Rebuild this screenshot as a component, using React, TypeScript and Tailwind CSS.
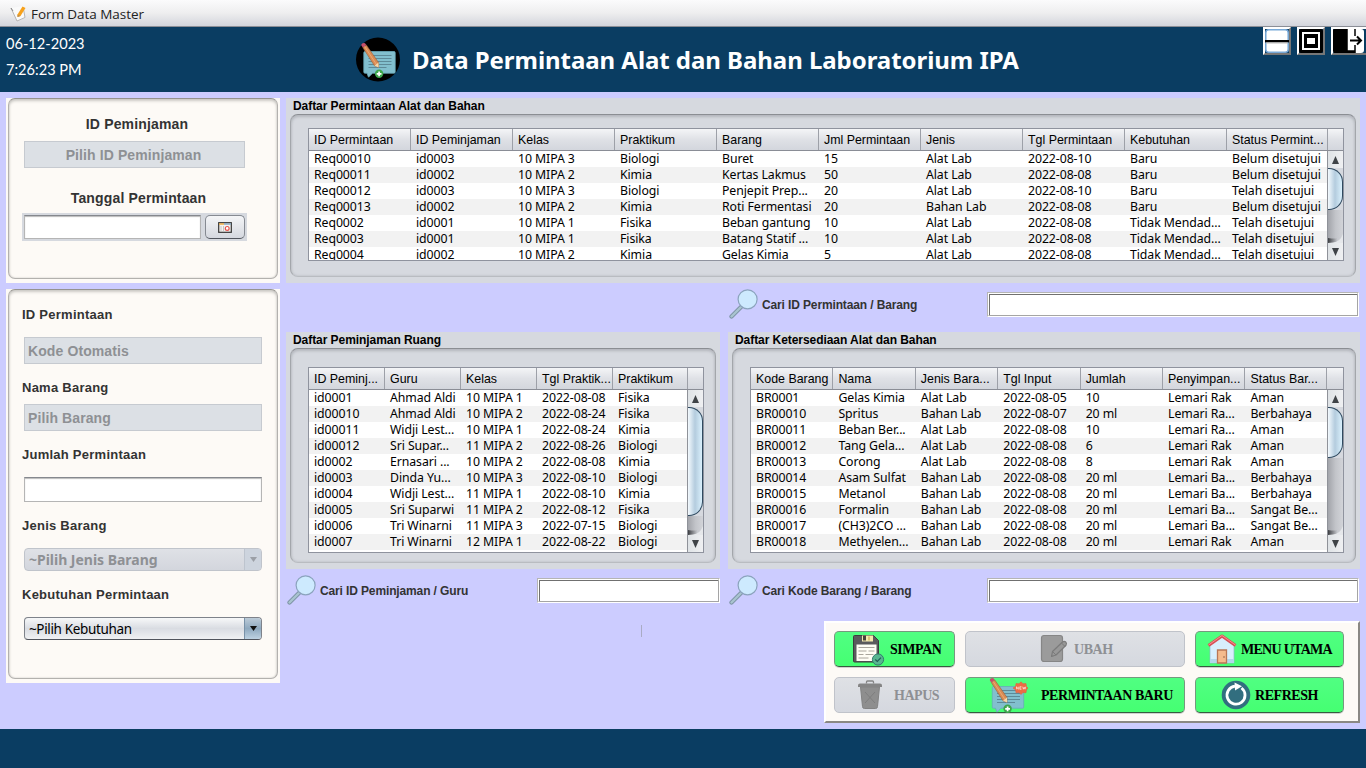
import React from "react";

const permintaanCols = ["ID Permintaan", "ID Peminjaman", "Kelas", "Praktikum", "Barang", "Jml Permintaan", "Jenis", "Tgl Permintaan", "Kebutuhan", "Status Permint..."];
const permintaanRows = [
  ["Req00010", "id0003", "10 MIPA 3", "Biologi", "Buret", "15", "Alat Lab", "2022-08-10", "Baru", "Belum disetujui"],
  ["Req00011", "id0002", "10 MIPA 2", "Kimia", "Kertas Lakmus", "50", "Alat Lab", "2022-08-08", "Baru", "Belum disetujui"],
  ["Req00012", "id0003", "10 MIPA 3", "Biologi", "Penjepit Prep...", "20", "Alat Lab", "2022-08-10", "Baru", "Telah disetujui"],
  ["Req00013", "id0002", "10 MIPA 2", "Kimia", "Roti Fermentasi", "20", "Bahan Lab", "2022-08-08", "Baru", "Belum disetujui"],
  ["Req0002", "id0001", "10 MIPA 1", "Fisika", "Beban gantung", "10", "Alat Lab", "2022-08-08", "Tidak Mendad...", "Telah disetujui"],
  ["Req0003", "id0001", "10 MIPA 1", "Fisika", "Batang Statif ...", "10", "Alat Lab", "2022-08-08", "Tidak Mendad...", "Telah disetujui"],
  ["Req0004", "id0002", "10 MIPA 2", "Kimia", "Gelas Kimia", "5", "Alat Lab", "2022-08-08", "Tidak Mendad...", "Telah disetujui"],
];

const ruangCols = ["ID Peminj...", "Guru", "Kelas", "Tgl Praktik...", "Praktikum"];
const ruangRows = [
  ["id0001", "Ahmad Aldi", "10 MIPA 1", "2022-08-08", "Fisika"],
  ["id00010", "Ahmad Aldi", "10 MIPA 2", "2022-08-24", "Fisika"],
  ["id00011", "Widji Lest...", "10 MIPA 1", "2022-08-24", "Kimia"],
  ["id00012", "Sri Supar...", "11 MIPA 2", "2022-08-26", "Biologi"],
  ["id0002", "Ernasari ...", "10 MIPA 2", "2022-08-08", "Kimia"],
  ["id0003", "Dinda Yu...", "10 MIPA 3", "2022-08-10", "Biologi"],
  ["id0004", "Widji Lest...", "11 MIPA 1", "2022-08-10", "Kimia"],
  ["id0005", "Sri Suparwi", "11 MIPA 2", "2022-08-12", "Fisika"],
  ["id0006", "Tri Winarni", "11 MIPA 3", "2022-07-15", "Biologi"],
  ["id0007", "Tri Winarni", "12 MIPA 1", "2022-08-22", "Biologi"],
];

const barangCols = ["Kode Barang", "Nama", "Jenis Bara...", "Tgl Input", "Jumlah", "Penyimpan...", "Status Bar..."];
const barangRows = [
  ["BR0001", "Gelas Kimia", "Alat Lab", "2022-08-05", "10", "Lemari Rak", "Aman"],
  ["BR00010", "Spritus", "Bahan Lab", "2022-08-07", "20 ml", "Lemari Ra...", "Berbahaya"],
  ["BR00011", "Beban Ber...", "Alat Lab", "2022-08-08", "10", "Lemari Ra...", "Aman"],
  ["BR00012", "Tang Gela...", "Alat Lab", "2022-08-08", "6", "Lemari Rak", "Aman"],
  ["BR00013", "Corong", "Alat Lab", "2022-08-08", "8", "Lemari Rak", "Aman"],
  ["BR00014", "Asam Sulfat", "Bahan Lab", "2022-08-08", "20 ml", "Lemari Ba...", "Berbahaya"],
  ["BR00015", "Metanol", "Bahan Lab", "2022-08-08", "20 ml", "Lemari Ba...", "Berbahaya"],
  ["BR00016", "Formalin", "Bahan Lab", "2022-08-08", "20 ml", "Lemari Ba...", "Sangat Be..."],
  ["BR00017", "(CH3)2CO ...", "Bahan Lab", "2022-08-08", "20 ml", "Lemari Ba...", "Sangat Be..."],
  ["BR00018", "Methyelen...", "Bahan Lab", "2022-08-08", "20 ml", "Lemari Rak", "Aman"],
];

function ScrollBar({ thumb }: { thumb: string }) {
  return (
    <div className="flex w-4 shrink-0 flex-col overflow-hidden border-l border-[#8f9299] bg-[#d6d9df]">
      <div className="flex h-[17px] shrink-0 items-center justify-center bg-gradient-to-r from-[#dfe3e6] to-[#eff0f2]">
        <svg width="7" height="8" viewBox="0 0 7 8"><path d="M3.5 0 7 8H0z" fill="#3f4347" /></svg>
      </div>
      <div className={`${thumb} shrink-0 rounded-r-[14px] border border-l-0 border-[#2f4a60] bg-gradient-to-r from-[#f4fafe] via-[#b4ccde] to-[#d9f0fc]`} />
      <div className="min-h-0 flex-1 bg-gradient-to-r from-[#a2a4aa] via-[#c2c4c9] to-[#d2d4d9]">
        <div className="flex h-full items-end">
          <svg width="15" height="9" viewBox="0 0 15 9">
            <defs><linearGradient id="grip"><stop offset="0" stopColor="#3c3e42" /><stop offset="1" stopColor="#c2c4c9" /></linearGradient></defs>
            <path d="M0 4Q7 5 9 4L9 9H0z" fill="url(#grip)" /><path d="M0 9H15V0Q12 8 5 8.5z" fill="#e6e8eb" />
          </svg>
        </div>
      </div>
      <div className="flex h-[17px] shrink-0 items-center justify-center bg-gradient-to-r from-[#dfe3e6] to-[#eff0f2]">
        <svg width="7" height="8" viewBox="0 0 7 8"><path d="M3.5 8 7 0H0z" fill="#3f4347" /></svg>
      </div>
    </div>
  );
}

function DataTable({ cols, rows, col, height, thumb }: { cols: string[]; rows: string[][]; col: string; height: string; thumb: string }) {
  return (
    <div className={`flex flex-col overflow-hidden border border-[#8f939e] bg-white ${height}`}>
      <div className="flex h-[22px] shrink-0 border-b border-[#8a8d96] bg-gradient-to-b from-[#f4f5f7] via-[#dfe1e6] to-[#d3d6dd]">
        {cols.map((c) => (
          <div key={c} className={`${col} shrink-0 overflow-hidden border-r border-[#9da0a8] pl-[5px] font-['Liberation_Sans',sans-serif] text-[12.4px] leading-[22px] whitespace-nowrap text-black last:w-[calc(var(--w)-1px)]`}>{c}</div>
        ))}
      </div>
      <div className="flex min-h-0 flex-1">
        <div className="min-w-0 flex-1 overflow-hidden">
          {rows.map((r, i) => (
            <div key={i} className="flex h-4 odd:bg-white even:bg-[#f2f2f2]">
              {r.map((v, j) => (
                <div key={j} className={`${col} shrink-0 pl-[5px] font-['Noto_Sans',sans-serif] text-[12.3px] leading-[15px] tracking-[-0.08px] whitespace-nowrap text-black`}>{v}</div>
              ))}
            </div>
          ))}
        </div>
        <ScrollBar thumb={thumb} />
      </div>
    </div>
  );
}

function TitledPanel({ title, size, pad, children }: { title: string; size: string; pad: string; children: React.ReactNode }) {
  return (
    <section className={`flex shrink-0 flex-col bg-[#d6d9df] px-[4px] pb-[6px] ${size}`}>
      <h2 className="h-4 shrink-0 pl-[3px] font-['Liberation_Sans',sans-serif] text-[12px] leading-[17px] font-bold tracking-[-0.06px] whitespace-nowrap text-black">{title}</h2>
      <div className={`min-h-0 flex-1 rounded-[8px] border border-[#a3a6ab] border-t-[#8b8e93] border-b-[#b9bcc1] px-[17px] shadow-[inset_0_2px_3px_#b5b8be,inset_0_0_3px_#b9bcc2] ${pad}`}>{children}</div>
    </section>
  );
}

function SearchIcon() {
  return (
    <svg className="shrink-0" width="30" height="30" viewBox="-1 0 30 30" fill="none">
      <path d="M2.5 27.5 12 18" stroke="#7d93a5" strokeWidth="4.2" strokeLinecap="round" />
      <path d="M2.5 27.5 12 18" stroke="#a9c4cf" strokeWidth="2.4" strokeLinecap="round" />
      <circle cx="18.6" cy="10.3" r="9.5" fill="#cdeafe" stroke="#8ba3bd" strokeWidth="1.2" />
    </svg>
  );
}

function SearchField({ label, input, gap }: { label: string; input: string; gap: string }) {
  return (
    <div className="flex items-center">
      <SearchIcon />
      <span className={`shrink-0 pt-[2px] pl-[4px] font-['Liberation_Sans',sans-serif] text-[12px] font-bold tracking-[-0.13px] whitespace-nowrap text-[#333] ${gap}`}>{label}</span>
      <div className={`h-[25px] shrink-0 border border-[#b5b5b5] border-r-white border-b-white bg-white ${input}`}>
        <div className="h-full border border-white border-r-[#a5a5a5] border-b-[#a5a5a5]">
          <div className="h-full border-t border-l border-[#707070]" />
        </div>
      </div>
    </div>
  );
}

function CardPanel({ size, children }: { size: string; children: React.ReactNode }) {
  return (
    <section className={`bg-[#fdfaf6] px-[2px] pb-[4px] ${size}`}>
      <div className="flex h-full flex-col rounded-[7px] border border-[#b3b1ae] border-t-[#95938f] px-[15px] shadow-[inset_0_2px_3px_#cbc9c5,inset_0_0_2px_#cbc9c5]">{children}</div>
    </section>
  );
}

function ChatPencil({ badge }: { badge?: boolean }) {
  return (
    <>
      <path d="M5.500 9.500H34.500q1.200 0 1.200 1.200V30q0 1.200-1.200 1.200H13l-4 4-1.500-4H5.500Q4.300 31.200 4.300 30V10.700Q4.300 9.500 5.500 9.500z" fill="#82bfce" stroke="#6aa9ba" strokeWidth=".8" />
      <path d="M9 13.500h23M9 16.500h23M9 19.500h23M9 22.500h23M9 25.500h18" stroke="#5d8a99" strokeWidth="1" />
      <path d="M3.300 5.500 6.800 3 19 20.500v4.800l-4-1.500z" fill="#d98b54" stroke="#9b5e38" strokeWidth=".6" />
      <path d="M5 4.300 17 22.500" stroke="#eba873" strokeWidth="1" />
      <path d="M3.300 5.500 6.800 3 5.500 1.200Q3.800.5 2.600 1.500T2 3.700z" fill="#c44f6c" />
      <path d="m15 23.800 4-3.300.1 5z" fill="#f3d8ac" />
      <circle cx="19.600" cy="31.800" r="4.200" fill="#3da64c" />
      <path d="M19.600 29.400v4.800M17.200 31.800h4.800" stroke="white" strokeWidth="1.700" />
      {badge && (
        <g>
          <path d="m25 11 2.500-1.500.5-3 3 .3 2-2 2 2 3-.3.5 3 1.500 1.500-1.500 1.800-.5 3-3-.3-2 2-2-2-3 .3-.5-3z" fill="#ee6c45" stroke="#e0593a" strokeWidth=".5" />
          <path d="M28.500 12.300v-2.600l1.800 2.600V9.700M33.500 9.700h-1.700v2.600h1.700M31.800 11h1.500M34.700 9.700l.7 2.500.8-2 .8 2 .7-2.500" fill="none" stroke="#fff" strokeWidth=".6" />
        </g>
      )}
    </>
  );
}

function ActionButton({ label, icon, size, disabled }: { label: string; icon: React.ReactNode; size: string; disabled?: boolean }) {
  return (
    <button
      className={`flex h-9 shrink-0 items-center rounded-[5px] border font-['Liberation_Serif',serif] text-[14px] font-bold tracking-[-0.45px] whitespace-nowrap ${size} ${
        disabled ? "border-[#c0c3ca] bg-gradient-to-b from-[#dfe1e5] to-[#d5d8df] text-[#8e9094]" : "border-[#75997f] border-b-[#375b40] bg-gradient-to-b from-[#50ff82] to-[#45ff72] text-black shadow-[0_1px_0_#d0d1cf]"
      }`}
    >
      {icon}
      <span>{label}</span>
    </button>
  );
}

const label = "font-['Liberation_Sans',sans-serif] text-[13px] leading-[18px] h-4 font-bold tracking-[0.25px] whitespace-nowrap text-[#333]";
const bigLabel = "text-center font-['Liberation_Sans',sans-serif] text-[14px] leading-4 font-bold tracking-[0.15px] whitespace-nowrap text-[#333]";
const disabledField = "h-[27px] border border-[#c6cad0] bg-[#dce0e5] font-['Liberation_Sans',sans-serif] text-[14px] leading-[27px] font-bold whitespace-nowrap text-[#8e9094]";

export default function App() {
  return (
    <div className="flex h-[768px] w-[1366px] flex-col overflow-hidden bg-[#ccccff]">
      <div className="flex h-[27px] shrink-0 items-center border-b border-[#8b8e96] bg-gradient-to-b from-[#fbfbfc] via-[#eeeeef] to-[#d3d5dc] pl-[10px]">
        <svg width="17" height="17" viewBox="0 0 17 17">
          <path d="m1 3 12-2 2 12-8 3z" fill="#fafafa" />
          <path d="M1 3 7 16 15 12.500 13.500 4" fill="none" stroke="#b5b5b5" strokeWidth="1" />
          <path d="M1 3 3 6" stroke="#888" strokeWidth="1" />
          <path d="m7.500 9.500 5-8 3 1.500-5 8-3 1z" fill="#f7a11b" /><path d="m7.500 9.500 0 2.500 3-1z" fill="#ba8d50" />
        </svg>
        <span className="pt-[2px] pl-[4px] font-['Open_Sans',sans-serif] text-[13.500px] tracking-[-0.05px] text-[#222]">Form Data Master</span>
      </div>

      <header className="flex h-[65px] shrink-0 bg-[#0a3d62] text-white">
        <div className="w-[355px] pt-[4px] pl-[6px] font-['Lato',sans-serif] text-[14.600px] leading-[26px]">
          <div>06-12-2023</div>
          <div>7:26:23 PM</div>
        </div>
        <div className="flex w-[908px] items-center">
          <svg width="46" height="46" viewBox="0 0 46 46">
            <circle cx="23" cy="22.500" r="22" fill="#000" />
            <g transform="translate(4.500 5)"><ChatPencil /></g>
          </svg>
          <h1 className="pl-[11px] font-['Noto_Sans',sans-serif] text-[24px] font-bold tracking-[-0.05px] whitespace-nowrap">Data Permintaan Alat dan Bahan Laboratorium IPA</h1>
        </div>
        <div className="flex gap-[6px]">
          <div className="h-7 w-7 shrink-0 border-2 border-t-white border-r-[#777] border-b-[#777] border-l-white bg-[#0a3d62]">
            <svg width="24" height="24" viewBox="0 0 24 24"><rect x=".8" y=".8" width="22.400" height="22.400" rx="3" fill="#fff" stroke="#78a9d8" strokeWidth="1.500" /><path d="M0 12.200h24" stroke="#000" strokeWidth="2.400" /><path d="M1 14h22" stroke="#bbb" /></svg>
          </div>
          <div className="h-7 w-7 shrink-0 border-2 border-t-white border-r-[#777] border-b-[#777] border-l-white bg-[#0a3d62]">
            <svg width="24" height="24" viewBox="0 0 24 24"><rect width="24" height="24" rx="2" fill="#000" /><rect x="3" y="3" width="18" height="18" fill="#fff" /><rect x="5" y="5" width="14" height="14" fill="#000" /><rect x="8" y="9" width="8" height="6" fill="#fff" /></svg>
          </div>
          <div className="h-7 w-[35px] shrink-0 border-2 border-r-0 border-t-white border-b-[#777] border-l-white bg-[#0a3d62]">
            <svg width="33" height="24" viewBox="0 0 33 24"><rect width="31" height="24" rx="3" fill="#fff" /><path d="M2 0h12v24H2L0 21V2zM14 22h8v2h-8zM22 0v7M22 16v7" stroke="#000" strokeWidth="1.500" /><path d="M17 11.500h10M24 7.500l4 4-4 4" fill="none" stroke="#000" strokeWidth="2" /></svg>
          </div>
        </div>
      </header>

      <main className="flex h-[637px] shrink-0 gap-[6px] pt-[6px] pl-[6px]">
        <aside className="flex w-[274px] shrink-0 flex-col gap-[6px]">
          <CardPanel size="h-[185px]">
            <div className={`mt-[17px] pr-[12px] ${bigLabel}`}>ID Peminjaman</div>
            <div className={`mt-[9px] w-[221px] pr-[2px] text-center tracking-[0.1px] ${disabledField}`}>Pilih ID Peminjaman</div>
            <div className={`mt-[22px] pr-[9px] ${bigLabel}`}>Tanggal Permintaan</div>
            <div className="mt-[7px] -ml-[2px] flex h-7 w-[225px] shrink-0 gap-[4px] bg-[#d6d9df] p-[2px]">
              <div className="w-[177px] border border-[#b5b5b5] border-t-[#85888e] bg-white shadow-[inset_0_1px_1px_#bbb]" />
              <button className="flex w-10 items-center justify-center rounded-[5px] border border-[#868a92] border-b-[#50545c] bg-gradient-to-b from-[#f4f5f7] to-[#d5d8df]">
                <svg width="14" height="11" viewBox="0 0 14 11"><rect x=".7" y=".7" width="12.600" height="9.600" fill="#f5f3f0" stroke="#333" strokeWidth="1.200" /><path d="M1 2h5" stroke="#ecac45" strokeWidth="1.500" /><path d="M6 2h7" stroke="#87a9c2" strokeWidth="1.500" /><path d="M3 4v5M5.500 4v5" stroke="#c6c6c6" /><circle cx="9.200" cy="6.400" r="1.900" fill="#fff" stroke="#e6534d" strokeWidth="1.200" /></svg>
              </button>
            </div>
          </CardPanel>
          <CardPanel size="h-[394px]">
            <div className={`mt-[16px] -ml-[2px] ${label}`}>ID Permintaan</div>
            <div className={`mt-[15px] w-[238px] pl-[3px] tracking-[0.1px] ${disabledField}`}>Kode Otomatis</div>
            <div className={`mt-[15px] -ml-[2px] ${label}`}>Nama Barang</div>
            <div className={`mt-[9px] w-[238px] pl-[3px] tracking-[0.1px] ${disabledField}`}>Pilih Barang</div>
            <div className={`mt-[15px] -ml-[2px] ${label}`}>Jumlah Permintaan</div>
            <div className="mt-[15px] h-[25px] w-[238px] border border-[#b5b5b5] border-t-[#85888e] bg-white shadow-[inset_0_1px_1px_#bbb]" />
            <div className={`mt-[15px] -ml-[2px] ${label}`}>Jenis Barang</div>
            <div className="mt-[15px] flex h-[23px] w-[238px] overflow-hidden rounded-[4px] border border-[#c0c4cb] bg-gradient-to-b from-[#dfe1e6] to-[#d3d6dd] pl-[4px]">
              <span className="flex-1 font-['Noto_Sans',sans-serif] text-[14px] leading-[22px] font-bold tracking-[-0.02px] whitespace-nowrap text-[#8e9094]">~Pilih Jenis Barang</span>
              <span className="flex w-[17px] items-center justify-center border-l border-[#bdc4ce] bg-[#cdd4de]"><svg width="7" height="5" viewBox="0 0 7 5"><path d="M0 0h7L3.500 5z" fill="#9b9fa6" /></svg></span>
            </div>
            <div className={`mt-[15px] -ml-[2px] ${label}`}>Kebutuhan Permintaan</div>
            <div className="mt-[15px] flex h-[23px] w-[238px] overflow-hidden rounded-[4px] border border-[#7e828a] border-b-[#50545c] bg-gradient-to-b from-[#f7f8f9] via-[#d9dce2] to-[#f0f1f3] pl-[4px]">
              <span className="flex-1 font-['Noto_Sans',sans-serif] text-[13.500px] leading-[22px] tracking-[-0.35px] whitespace-nowrap text-black">~Pilih Kebutuhan</span>
              <span className="flex w-[17px] items-center justify-center border-l border-[#7992a8] bg-gradient-to-b from-[#bccbd8] via-[#8fa9bf] to-[#bed2e2]"><svg width="7" height="5" viewBox="0 0 7 5"><path d="M0 0h7L3.500 5z" fill="#111" /></svg></span>
            </div>
          </CardPanel>
        </aside>

        <div className="flex w-[1074px] shrink-0 flex-col">
          <TitledPanel title="Daftar Permintaan Alat dan Bahan" size="h-[185px]" pad="pt-[13px] pr-[11px]">
            <DataTable cols={permintaanCols} rows={permintaanRows} col="w-[102px] [--w:102px]" height="h-[133px]" thumb="h-[42px]" />
          </TitledPanel>
          <div className="flex h-[49px] shrink-0 pt-[6px] pl-[442px]">
            <div className="h-[30px]"><SearchField label="Cari ID Permintaan / Barang" gap="w-[229px]" input="w-[372px]" /></div>
          </div>
          <div className="flex shrink-0 gap-[8px]">
            <TitledPanel title="Daftar Peminjaman Ruang" size="h-[237px] w-[434px]" pad="pt-[18px] pr-[11px]">
              <DataTable cols={ruangCols} rows={ruangRows} col="w-[76px] [--w:76px]" height="h-[186px]" thumb="h-[109px]" />
            </TitledPanel>
            <TitledPanel title="Daftar Ketersediaan Alat dan Bahan" size="h-[237px] w-[632px]" pad="pt-[18px] pr-[11px]">
              <DataTable cols={barangCols} rows={barangRows} col="w-[82.420px] [--w:82.420px]" height="h-[186px]" thumb="h-[51px]" />
            </TitledPanel>
          </div>
          <div className="flex h-[52px] shrink-0 pt-[6px]">
            <div className="h-[30px] w-[442px]"><SearchField label="Cari ID Peminjaman / Guru" gap="w-[221px]" input="w-[183px]" /></div>
            <div className="h-[30px]"><SearchField label="Cari Kode Barang / Barang" gap="w-[229px]" input="w-[372px]" /></div>
          </div>
          <div className="flex shrink-0 justify-between pl-[355px]">
            <div className="mt-[4px] h-[12px] w-px bg-[#a9abc4]" />
            <div className="flex h-[102px] w-[536px] flex-col gap-[10px] border-2 border-t-white border-r-[#8a8884] border-b-[#8a8884] border-l-white bg-[#fdfaf6] pt-[8px] pl-[8px]">
              <div className="flex gap-[10px]">
                <ActionButton label="SIMPAN" size="w-[121px] pl-[17px] gap-[5px]" icon={
                  <svg width="33" height="33" viewBox="0 0 33 33"><path d="M2.500 2.500h19l5 5V28q0 1-1 1h-23q-1 0-1-1V3.500q0-1 1-1z" fill="#5a5a5c" stroke="#3c3c3e" /><path d="M10 2.500h11v6H10z" fill="#f5e9ae" /><path d="M11 2.500h3v5h-3z" fill="#46423a" /><path d="M16 3.500h2v4h-2z" fill="#d8c478" /><path d="M4.500 11.500h20V28h-20z" fill="#fffdf4" /><path d="M6.500 14.500h16M6.500 18h8M16.500 18h6M6.500 21.500h5M13.500 21.500h8M6.500 25h10" stroke="#aaa69c" strokeWidth="1" /><circle cx="26" cy="26.500" r="5.600" fill="#57b58f" stroke="#327a6d" /><path d="m23.300 26.500 2 2 3.700-3.800" fill="none" stroke="#1f5a54" strokeWidth="1.100" /></svg>} />
                <ActionButton label="UBAH" disabled size="w-[220px] pl-[74px] gap-[6px]" icon={
                  <svg width="28" height="32" viewBox="0 0 28 32"><rect x="1.500" y="2.500" width="21" height="26" rx="2.500" fill="#9b9b9b" stroke="#868686" strokeWidth="1.200" /><path d="m11.500 23.500 1-5L22.500 9q1.800-1.300 3.200 0t.3 3.200L16 22z" fill="#989898" stroke="#7b7b7b" strokeWidth="1.200" strokeLinejoin="round" /><path d="m12.500 18.500 3.500 3.500M21.500 10l3.500 3.500" stroke="#7b7b7b" /></svg>} />
                <ActionButton label="MENU UTAMA" size="w-[149px] pl-[11px] gap-[4px] tracking-[-0.72px]" icon={
                  <svg width="30" height="32" viewBox="0 0 30 32"><path d="M3 12 15 3l12 9v18H3z" fill="#d8effd" stroke="#91b8cd" strokeWidth=".7" /><path d="M3 26h24v4H3z" fill="#b3d7ec" /><path d="M10.500 17h9v13h-9z" fill="#f5bb8d" stroke="#b97755" strokeWidth="1.300" /><circle cx="17" cy="24" r=".8" fill="#8d5b45" /><path d="M1.500 12.500 15 3l13.500 9.500" fill="none" stroke="#d94e55" strokeWidth="3" strokeLinejoin="round" /><path d="M1.500 12 15 2.500 28.500 12" fill="none" stroke="#f69393" strokeWidth="1" /></svg>} />
              </div>
              <div className="flex gap-[10px]">
                <ActionButton label="HAPUS" disabled size="w-[121px] pl-[22px] gap-[11px]" icon={
                  <svg width="26" height="32" viewBox="0 0 26 32"><path d="m3.500 8 2 19.500q0 2 2 2h11q2 0 2-2L22.500 8z" fill="#8e8e8e" stroke="#828282" /><path d="M1 6.300q0-1.800 2-1.800h20q2 0 2 1.800V8H1z" fill="#858585" /><path d="M9.500 4.500V3q0-1 1-1h5q1 0 1 1v1.500" fill="none" stroke="#858585" strokeWidth="1.300" /><path d="m8 13 10 11M18 13 8 24" stroke="#7a7a7a" strokeWidth=".8" /></svg>} />
                <ActionButton label="PERMINTAAN BARU" size="w-[220px] pl-[22px] gap-[11px]" icon={
                  <svg width="42" height="36" viewBox="0 0 42 36"><ChatPencil badge /></svg>} />
                <ActionButton label="REFRESH" size="w-[149px] pl-[25px] gap-[4px]" icon={
                  <svg width="30" height="30" viewBox="0 0 30 30"><circle cx="15" cy="15" r="14.300" fill="#326e7f" /><path d="M20.500 8A9 9 0 1 1 14 6.200" fill="none" stroke="#fff" strokeWidth="2.800" /><path d="m13.500 2.500 7.500 3.700-7 4.300z" fill="#fff" /></svg>} />
              </div>
            </div>
          </div>
        </div>
      </main>

      <footer className="min-h-0 flex-1 bg-[#0a3d62]" />
    </div>
  );
}
